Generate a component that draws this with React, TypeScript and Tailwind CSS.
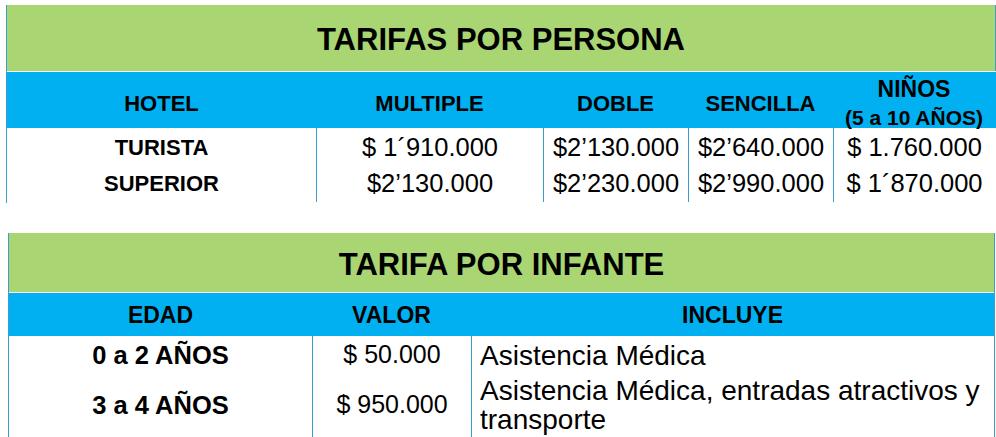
export default function App() {
  const line = "border-[#3a9fd0]";
  return (
    <div className="w-[996px] h-[437px] overflow-hidden bg-white text-black font-['Liberation_Sans',Arial,sans-serif]">
      {/* Table 1 */}
      <div className="pt-[5px] pl-[6px]">
        <div className={`w-[990px] border-l ${line} pb-[4px]`}>
          <div className={`h-[66px] bg-[#a9d672] border-r ${line} flex items-center justify-center text-[31px] font-bold leading-none pt-[3px]`}>
            TARIFAS POR PERSONA
          </div>
          <div className="h-px bg-white" />
          <div className="h-[56px] bg-[#00b0f0] grid grid-cols-[309px_227px_145px_145px_162px] items-center text-[22px] font-bold leading-none">
            <div className="text-center pt-[6px]">HOTEL</div>
            <div className="text-center pt-[6px]">MULTIPLE</div>
            <div className="text-center pt-[6px]">DOBLE</div>
            <div className="text-center pt-[6px]">SENCILLA</div>
            <div className="self-stretch flex flex-col items-center pt-[4px]">
              <span className="text-[23px] leading-[26px]">NIÑOS</span>
              <span className="text-[21px] leading-[22px] mt-[5px] whitespace-nowrap">(5 a 10 AÑOS)</span>
            </div>
          </div>
          <div className="flex flex-col gap-px bg-white">
            {[
              ["TURISTA", "$ 1´910.000", "$2’130.000", "$2’640.000", "$ 1.760.000"],
              ["SUPERIOR", "$2’130.000", "$2’230.000", "$2’990.000", "$ 1´870.000"],
            ].map((r, i) => (
              <div key={i} className="h-[35px] grid grid-cols-[309px_227px_145px_145px_162px] items-stretch">
                <div className="flex items-center justify-center text-[22px] font-bold">{r[0]}</div>
                {r.slice(1).map((v, j) => (
                  <div key={j} className={`flex items-center justify-center border-l ${line} text-[25.5px] whitespace-nowrap`}>
                    {v}
                  </div>
                ))}
              </div>
            ))}
          </div>
        </div>
      </div>

      {/* Table 2 */}
      <div className="mt-[30px] pl-[8px]">
        <div className={`w-[987px] border-l border-r ${line}`}>
          <div className="h-[59px] bg-[#a9d672] flex items-center justify-center text-[31px] font-bold leading-none pt-[3px]">
            TARIFA POR INFANTE
          </div>
          <div className="h-px bg-white" />
          <div className="h-[43px] bg-[#00b0f0] grid grid-cols-[303px_159px_523px] items-center text-[23px] font-bold leading-none">
            <div className="text-center pt-[2px]">EDAD</div>
            <div className="text-center pt-[2px]">VALOR</div>
            <div className="text-center pt-[2px]">INCLUYE</div>
          </div>
          <div className="flex flex-col gap-px bg-white">
            <div className="h-[35px] grid grid-cols-[303px_159px_523px]">
              <div className="flex items-center justify-center text-[25.5px] font-bold">0 a 2 AÑOS</div>
              <div className={`flex items-center justify-center border-l ${line} text-[25px]`}>$ 50.000</div>
              <div className={`flex items-center border-l ${line} pl-[8px] text-[28px] leading-[29px] whitespace-nowrap`}>Asistencia Médica</div>
            </div>
            <div className="h-[66px] grid grid-cols-[303px_159px_523px]">
              <div className="flex items-center justify-center text-[25.5px] font-bold">3 a 4 AÑOS</div>
              <div className={`flex items-center justify-center border-l ${line} text-[25px]`}>$ 950.000</div>
              <div className={`flex items-center border-l ${line} pl-[8px] text-[28px] leading-[29px] whitespace-nowrap`}>
                <span>
                  Asistencia Médica, entradas atractivos y
                  <br />
                  transporte
                </span>
              </div>
            </div>
          </div>
        </div>
      </div>
    </div>
  );
}
